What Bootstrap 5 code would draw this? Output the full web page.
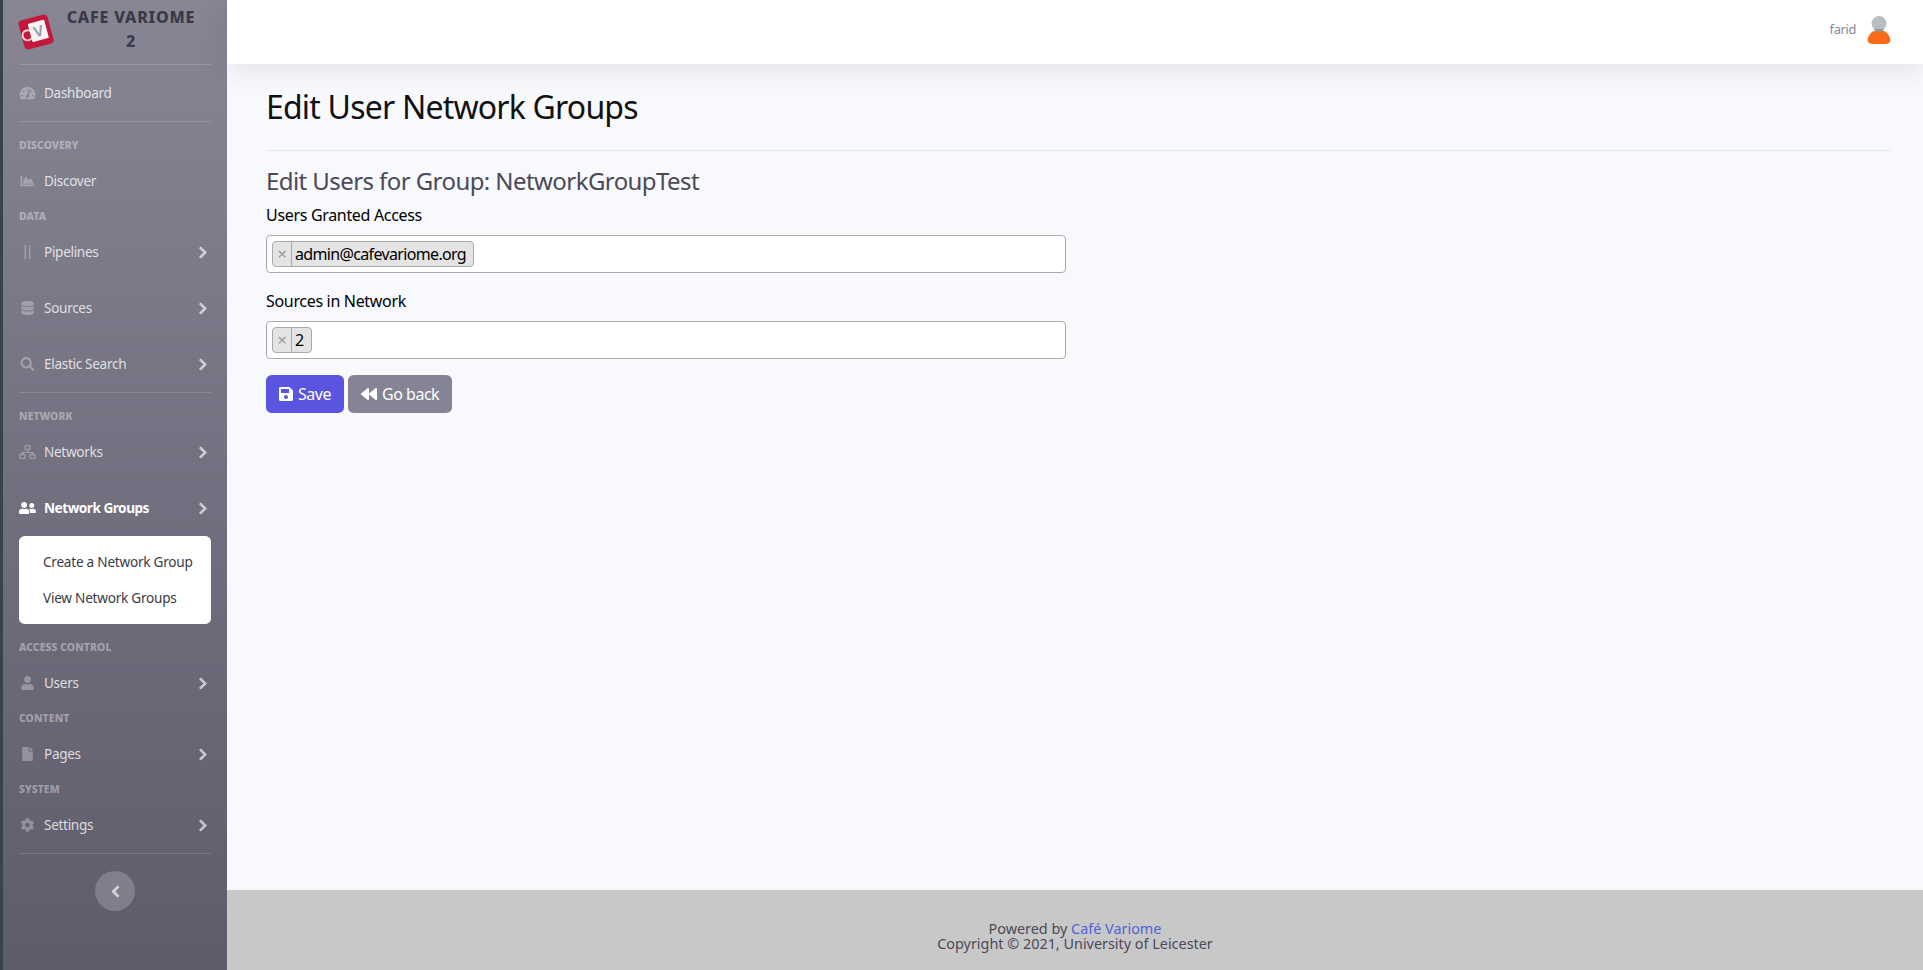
<!DOCTYPE html>
<html lang="en">
<head>
<meta charset="utf-8">
<title>Edit User Network Groups</title>
<link rel="stylesheet" href="https://cdn.jsdelivr.net/npm/bootstrap@5.3.3/dist/css/bootstrap.min.css">
<style>
html, body { height: 100%; }
body { font-family: "Noto Sans", "Liberation Sans", sans-serif; background: #f8f9fc; color: #000; overflow: hidden; letter-spacing: -.02em; }
.app-shell { height: 970px; }
.side-bar { width: 227px; flex: none; border-left: 3px solid #37424b; background: linear-gradient(180deg, #878695 0%, #5e5b6b 100%); }
.side-brand { height: 64px; padding: 0 16px 6px 13px; }
.side-logo { width: 40px; height: 40px; flex: none; margin-top: 6px; }
.side-title { width: 134px; margin-left: 8px; text-align: center; font-size: 16px; line-height: 24px; font-weight: 800; letter-spacing: .8px; color: #3b3947; }
.side-rule { height: 1px; margin: 0 16px 16px; background: rgba(255,255,255,.15); flex: none; }
.side-rule-first { margin-bottom: 0; }
.side-head { height: 15px; line-height: 15px; padding: 0 16px; font-size: 10.4px; font-weight: 800; text-transform: uppercase; color: rgba(255,255,255,.4); letter-spacing: .01em; }
.side-link { height: 56px; padding: 0 16px; font-size: 13.6px; color: rgba(255,255,255,.78); text-decoration: none; }
.side-link.is-active { color: #fff; font-weight: 700; letter-spacing: -.035em; }
.side-ico { width: 25px; flex: none; display: flex; align-items: center; justify-content: center; padding-right: 8px; }
.side-ico svg { fill: rgba(255,255,255,.3); height: 14px; width: 17px; }
.side-link.is-active .side-ico svg { fill: #fff; }
.side-arrow { width: 10px; height: 13px; fill: rgba(255,255,255,.6); stroke: rgba(255,255,255,.6); stroke-width: 30; margin-left: auto; margin-right: 3px; }
.side-sub { background: #fff; margin: 0 16px 16px; height: 88px; border-radius: 5.6px; padding: 8px 0; }
.side-sub a { display: block; height: 36px; line-height: 36px; padding-left: 24px; font-size: 13.6px; color: #3a3b45; text-decoration: none; letter-spacing: -.018em; }
.side-toggle { width: 40px; height: 40px; border-radius: 50%; background: rgba(255,255,255,.2); border: 0; margin: 1px auto 0; }
.side-toggle svg { width: 9px; height: 13px; fill: rgba(255,255,255,.65); stroke: rgba(255,255,255,.65); stroke-width: 30; }
.top-bar { height: 64px; flex: none; background: #fff; box-shadow: 0 .15rem 1.75rem rgba(58,59,69,.15); padding-right: 32px; }
.top-user { font-size: 12.8px; color: #858796; margin-right: 11px; margin-bottom: 5px; }
.top-avatar { width: 24px; height: 30px; margin-bottom: 5px; }
.page-body { padding: 24px 32px 0 39px; }
.page-title { font-size: 32px; line-height: 38px; font-weight: 400; color: #111; margin: 0 0 24px; letter-spacing: -.025em; }
.page-rule { height: 1px; background: #e3e6f0; margin-bottom: 15px; }
.page-sub { font-size: 24px; line-height: 29px; font-weight: 400; color: #4b4957; margin: 0 0 8px; letter-spacing: -.024em; }
.field-wrap { width: 800px; }
.field-label { font-size: 16px; line-height: 24px; margin-bottom: 8px; letter-spacing: -.02em; }
.chip-box { height: 38px; background: #fff; border: 1px solid #aaa; border-radius: 4px; padding: 5px; margin-bottom: 16px; }
.chip-item { height: 26px; background: #e4e4e4; border: 1px solid #aaa; border-radius: 4px; font-size: 16px; line-height: 24px; color: #000; }
.chip-x { width: 19px; text-align: center; color: #999; border-right: 1px solid #aaa; font-size: 17px; }
.chip-text { padding: 0 7px 0 3px; letter-spacing: -.041em; }
.act-btn { height: 38px; font-size: 16px; padding: 0 13px; display: inline-flex; align-items: center; gap: 5px; color: #fff; border: 0; border-radius: 5.6px; letter-spacing: -.03em; }
.act-btn svg { fill: #fff; height: 16px; width: 14px; }
.act-save { background: #5a55e0; }
.act-back { background: #858494; }
.act-back svg { width: 16px; }
.foot-bar { height: 80px; flex: none; background: #c8c8c8; font-size: 14.4px; line-height: 15px; color: #4b4957; padding-top: 31px; letter-spacing: 0; }
.foot-bar a { color: #4e63d8; text-decoration: none; }
</style>
</head>
<body>
<svg width="0" height="0" class="d-none">
  <symbol id="i-gauge" viewBox="0 0 576 512"><path d="M288 32C128.94 32 0 160.94 0 320c0 52.8 14.25 102.26 39.06 144.8 5.61 9.62 16.3 15.2 27.44 15.2h443c11.14 0 21.83-5.58 27.44-15.2C561.75 422.26 576 372.8 576 320c0-159.06-128.94-288-288-288zm0 64c14.71 0 26.58 10.13 30.32 23.65-1.11 2.26-2.64 4.23-3.45 6.67l-9.22 27.67c-5.13 3.49-10.97 6.01-17.64 6.01-17.67 0-32-14.33-32-32S270.33 96 288 96zM96 384c-17.67 0-32-14.33-32-32s14.33-32 32-32 32 14.33 32 32-14.33 32-32 32zm48-160c-17.67 0-32-14.33-32-32s14.33-32 32-32 32 14.33 32 32-14.33 32-32 32zm246.77-72.41l-61.33 184C343.13 347.33 352 364.54 352 384c0 11.72-3.38 22.55-8.88 32H232.88c-5.5-9.45-8.88-20.28-8.88-32 0-33.94 26.5-61.43 59.9-63.59l61.34-184.01c4.17-12.56 17.73-19.45 30.36-15.17 12.57 4.19 19.35 17.79 15.17 30.36zm14.66 57.2l15.52-46.55c3.47-1.29 7.13-2.23 11.05-2.23 17.67 0 32 14.33 32 32s-14.33 32-32 32c-11.38-.01-20.89-6.28-26.57-15.22zM480 384c-17.67 0-32-14.33-32-32s14.33-32 32-32 32 14.33 32 32-14.33 32-32 32z"/></symbol>
  <symbol id="i-chart" viewBox="0 0 512 512"><path d="M500 384c6.6 0 12 5.4 12 12v40c0 6.6-5.4 12-12 12H12c-6.6 0-12-5.4-12-12V76c0-6.6 5.4-12 12-12h40c6.6 0 12 5.4 12 12v308h436zM372.7 159.5L288 216l-85.3-113.7c-5.1-6.8-15.5-6.3-19.9 1L96 248v104h384l-89.9-187.8c-3.2-6.5-11.4-8.7-17.4-4.7z"/></symbol>
  <symbol id="i-lines" viewBox="0 0 512 512"><rect x="150" y="0" width="48" height="512" rx="12"/><rect x="310" y="0" width="48" height="512" rx="12"/></symbol>
  <symbol id="i-db" viewBox="0 0 448 512"><path d="M448 73.143v45.714C448 159.143 347.667 192 224 192S0 159.143 0 118.857V73.143C0 32.857 100.333 0 224 0s224 32.857 224 73.143zM448 176v102.857C448 319.143 347.667 352 224 352S0 319.143 0 278.857V176c48.125 33.143 136.208 48.572 224 48.572S399.874 209.143 448 176zm0 160v102.857C448 479.143 347.667 512 224 512S0 479.143 0 438.857V336c48.125 33.143 136.208 48.572 224 48.572S399.874 369.143 448 336z"/></symbol>
  <symbol id="i-search" viewBox="0 0 512 512"><path d="M505 442.7L405.3 343c-4.5-4.5-10.6-7-17-7H372c27.6-35.3 44-79.7 44-128C416 93.1 322.9 0 208 0S0 93.1 0 208s93.1 208 208 208c48.3 0 92.7-16.4 128-44v16.3c0 6.4 2.5 12.5 7 17l99.7 99.7c9.4 9.4 24.6 9.4 33.9 0l28.3-28.3c9.4-9.4 9.4-24.6.1-34zM208 336c-70.7 0-128-57.2-128-128 0-70.7 57.2-128 128-128 70.7 0 128 57.2 128 128 0 70.7-57.2 128-128 128z"/></symbol>
  <symbol id="i-sitemap" viewBox="0 0 16 14"><path fill-rule="evenodd" d="M5 0h6v5H8.700v2H14v2h2v5h-6V9h2V8H4v1h2v5H0V9h2V7h5.300V5H5zM6.300 1.300v2.400h3.400V1.300zM1.300 10.300v2.400h3.400v-2.400zM11.300 10.300v2.400h3.400v-2.400z"/></symbol>
  <symbol id="i-users" viewBox="0 0 640 512"><path d="M192 256c61.9 0 112-50.1 112-112S253.9 32 192 32 80 82.1 80 144s50.1 112 112 112zm76.8 32h-8.3c-20.8 10-43.9 16-68.5 16s-47.6-6-68.5-16h-8.3C51.6 288 0 339.6 0 403.2V432c0 26.5 21.5 48 48 48h288c26.5 0 48-21.5 48-48v-28.8c0-63.6-51.6-115.2-115.2-115.2zM480 256c53 0 96-43 96-96s-43-96-96-96-96 43-96 96 43 96 96 96zm48 32h-3.8c-13.9 4.8-28.6 8-44.2 8s-30.3-3.2-44.2-8H432c-20.4 0-39.2 5.9-55.7 15.4 24.4 26.3 39.7 61.2 39.7 99.8v38.4c0 2.2-.5 4.3-.6 6.4H592c26.5 0 48-21.5 48-48 0-61.9-50.1-112-112-112z"/></symbol>
  <symbol id="i-user" viewBox="0 0 448 512"><path d="M224 256c70.7 0 128-57.3 128-128S294.7 0 224 0 96 57.3 96 128s57.3 128 128 128zm89.6 32h-16.7c-22.2 10.2-46.9 16-72.9 16s-50.6-5.8-72.9-16h-16.7C60.2 288 0 348.2 0 422.4V464c0 26.5 21.5 48 48 48h352c26.5 0 48-21.5 48-48v-41.6c0-74.2-60.2-134.4-134.4-134.4z"/></symbol>
  <symbol id="i-file" viewBox="0 0 384 512"><path d="M224 136V0H24C10.7 0 0 10.7 0 24v464c0 13.3 10.7 24 24 24h336c13.3 0 24-10.7 24-24V160H248c-13.2 0-24-10.8-24-24zm160-14.1v6.1H256V0h6.1c6.4 0 12.5 2.5 17 7l97.9 98c4.5 4.5 7 10.6 7 16.9z"/></symbol>
  <symbol id="i-cog" viewBox="0 0 512 512"><path d="M487.4 315.7l-42.6-24.6c4.3-23.2 4.3-47 0-70.2l42.6-24.6c4.9-2.8 7.1-8.6 5.5-14-11.1-35.6-30-67.8-54.7-94.6-3.8-4.1-10-5.1-14.8-2.3L380.8 110c-17.9-15.4-38.5-27.3-60.8-35.1V25.8c0-5.6-3.9-10.5-9.4-11.7-36.7-8.2-74.3-7.8-109.2 0-5.5 1.2-9.4 6.1-9.4 11.7V75c-22.2 7.9-42.8 19.8-60.8 35.1L88.7 85.5c-4.9-2.8-11-1.9-14.8 2.3-24.7 26.7-43.6 58.9-54.7 94.6-1.7 5.4.6 11.2 5.5 14L67.3 221c-4.3 23.2-4.3 47 0 70.2l-42.6 24.6c-4.9 2.8-7.1 8.6-5.5 14 11.1 35.6 30 67.8 54.7 94.6 3.8 4.1 10 5.1 14.8 2.3l42.6-24.6c17.9 15.4 38.5 27.3 60.8 35.1v49.2c0 5.6 3.9 10.5 9.4 11.7 36.7 8.2 74.3 7.8 109.2 0 5.5-1.2 9.4-6.1 9.4-11.7v-49.2c22.2-7.9 42.8-19.8 60.8-35.1l42.6 24.6c4.9 2.8 11 1.9 14.8-2.3 24.7-26.7 43.6-58.9 54.7-94.6 1.5-5.5-.7-11.3-5.6-14.1zM256 336c-44.1 0-80-35.9-80-80s35.9-80 80-80 80 35.9 80 80-35.9 80-80 80z"/></symbol>
  <symbol id="i-right" viewBox="0 0 320 512"><path d="M285.476 272.971L91.132 467.314c-9.373 9.373-24.569 9.373-33.941 0l-22.667-22.667c-9.357-9.357-9.375-24.522-.04-33.901L188.505 256 34.484 101.255c-9.335-9.379-9.317-24.544.04-33.901l22.667-22.667c9.373-9.373 24.569-9.373 33.941 0L285.475 239.03c9.373 9.372 9.373 24.568.001 33.941z"/></symbol>
  <symbol id="i-left" viewBox="0 0 320 512"><path d="M34.52 239.03L228.87 44.69c9.37-9.37 24.57-9.37 33.94 0l22.67 22.67c9.36 9.36 9.37 24.52.04 33.9L131.49 256l154.02 154.75c9.34 9.38 9.32 24.54-.04 33.9l-22.67 22.67c-9.37 9.37-24.57 9.37-33.94 0L34.52 272.97c-9.37-9.37-9.37-24.57 0-33.94z"/></symbol>
  <symbol id="i-save" viewBox="0 0 448 512"><path d="M433.941 129.941l-83.882-83.882A48 48 0 0 0 316.118 32H48C21.49 32 0 53.49 0 80v352c0 26.51 21.49 48 48 48h352c26.51 0 48-21.49 48-48V163.882a48 48 0 0 0-14.059-33.941zM224 416c-35.346 0-64-28.654-64-64 0-35.346 28.654-64 64-64s64 28.654 64 64c0 35.346-28.654 64-64 64zm96-304.52V212c0 6.627-5.373 12-12 12H76c-6.627 0-12-5.373-12-12V108c0-6.627 5.373-12 12-12h228.52c3.183 0 6.235 1.264 8.485 3.515l3.48 3.48A11.996 11.996 0 0 1 320 111.48z"/></symbol>
  <symbol id="i-back" viewBox="0 0 512 512"><path d="M11.5 280.6l192 160c20.6 17.2 52.5 2.8 52.5-24.6V96c0-27.4-31.9-41.8-52.5-24.6l-192 160c-15.3 12.8-15.3 36.4 0 49.2zm256 0l192 160c20.6 17.2 52.5 2.8 52.5-24.6V96c0-27.4-31.9-41.8-52.5-24.6l-192 160c-15.3 12.8-15.3 36.4 0 49.2z"/></symbol>
</svg>

<div class="app-shell d-flex">
  <!-- sidebar -->
  <nav class="side-bar d-flex flex-column">
    <div class="side-brand d-flex align-items-center">
      <svg class="side-logo" viewBox="0 0 40 40">
        <g transform="rotate(-15 20 20)">
          <rect x="5" y="5" width="30" height="30" rx="4" fill="#c4173c"/>
          <circle cx="11" cy="21" r="5" fill="none" stroke="#f2d5da" stroke-width="2"/>
          <rect x="14" y="10" width="17" height="19" rx="1" fill="#f4f4f4"/>
          <text x="22.5" y="25" font-size="15" font-weight="700" text-anchor="middle" fill="#9a9aa2" font-family="Liberation Sans, sans-serif">V</text>
        </g>
      </svg>
      <div class="side-title">CAFE VARIOME 2</div>
    </div>
    <div class="side-rule side-rule-first"></div>
    <a class="side-link d-flex align-items-center" href="#"><span class="side-ico"><svg><use href="#i-gauge"/></svg></span>Dashboard</a>
    <div class="side-rule"></div>

    <div class="side-head">Discovery</div>
    <a class="side-link d-flex align-items-center" href="#"><span class="side-ico"><svg><use href="#i-chart"/></svg></span>Discover</a>

    <div class="side-head">Data</div>
    <a class="side-link d-flex align-items-center" href="#"><span class="side-ico"><svg><use href="#i-lines"/></svg></span>Pipelines<svg class="side-arrow"><use href="#i-right"/></svg></a>
    <a class="side-link d-flex align-items-center" href="#"><span class="side-ico"><svg><use href="#i-db"/></svg></span>Sources<svg class="side-arrow"><use href="#i-right"/></svg></a>
    <a class="side-link d-flex align-items-center" href="#"><span class="side-ico"><svg><use href="#i-search"/></svg></span>Elastic Search<svg class="side-arrow"><use href="#i-right"/></svg></a>
    <div class="side-rule"></div>

    <div class="side-head">Network</div>
    <a class="side-link d-flex align-items-center" href="#"><span class="side-ico"><svg><use href="#i-sitemap"/></svg></span>Networks<svg class="side-arrow"><use href="#i-right"/></svg></a>
    <a class="side-link is-active d-flex align-items-center" href="#"><span class="side-ico"><svg><use href="#i-users"/></svg></span>Network Groups<svg class="side-arrow"><use href="#i-right"/></svg></a>
    <div class="side-sub">
      <a href="#">Create a Network Group</a>
      <a href="#">View Network Groups</a>
    </div>

    <div class="side-head">Access Control</div>
    <a class="side-link d-flex align-items-center" href="#"><span class="side-ico"><svg><use href="#i-user"/></svg></span>Users<svg class="side-arrow"><use href="#i-right"/></svg></a>

    <div class="side-head">Content</div>
    <a class="side-link d-flex align-items-center" href="#"><span class="side-ico"><svg><use href="#i-file"/></svg></span>Pages<svg class="side-arrow"><use href="#i-right"/></svg></a>

    <div class="side-head">System</div>
    <a class="side-link d-flex align-items-center" href="#"><span class="side-ico"><svg><use href="#i-cog"/></svg></span>Settings<svg class="side-arrow"><use href="#i-right"/></svg></a>
    <div class="side-rule"></div>
    <button class="side-toggle d-flex align-items-center justify-content-center" type="button"><svg><use href="#i-left"/></svg></button>
  </nav>

  <div class="d-flex flex-column flex-grow-1">
    <!-- topbar -->
    <header class="top-bar d-flex align-items-center justify-content-end">
      <span class="top-user">farid</span>
      <svg class="top-avatar" viewBox="0 0 24 30">
        <path d="M1 27c-1-2 0-5 2-8 2-2 5-4 9-4s7 2 9 4c2 3 3 6 2 8-1 1-3 2-5 2H6c-2 0-4-1-5-2z" fill="#f96a18"/>
        <circle cx="12" cy="8.500" r="7.500" fill="#b8bfc3"/>
        <path d="M7 14.500c1 1.500 3 2.500 5 2.500s4-1 5-2.500l-1-.5H8z" fill="#8f989c"/>
      </svg>
    </header>

    <!-- content -->
    <main class="page-body flex-grow-1">
      <h1 class="page-title">Edit User Network Groups</h1>
      <div class="page-rule"></div>
      <h2 class="page-sub">Edit Users for Group: NetworkGroupTest</h2>
      <div class="field-wrap">
        <div class="field-label">Users Granted Access</div>
        <div class="chip-box d-flex">
          <span class="chip-item d-inline-flex"><span class="chip-x">×</span><span class="chip-text">admin@cafevariome.org</span></span>
        </div>
        <div class="field-label">Sources in Network</div>
        <div class="chip-box d-flex">
          <span class="chip-item d-inline-flex"><span class="chip-x">×</span><span class="chip-text">2</span></span>
        </div>
        <div class="d-flex gap-1">
          <button class="btn act-btn act-save" type="button"><svg><use href="#i-save"/></svg>Save</button>
          <button class="btn act-btn act-back" type="button"><svg><use href="#i-back"/></svg>Go back</button>
        </div>
      </div>
    </main>

    <footer class="foot-bar text-center">
      <div>Powered by <a href="#">Café Variome</a></div>
      <div>Copyright © 2021, University of Leicester</div>
    </footer>
  </div>
</div>
<script src="https://cdn.jsdelivr.net/npm/bootstrap@5.3.3/dist/js/bootstrap.bundle.min.js"></script>
</body>
</html>
